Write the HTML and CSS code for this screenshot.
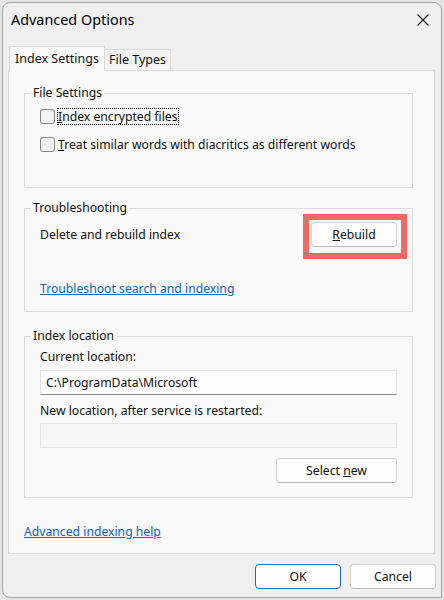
FILE: index.html
```html
<!DOCTYPE html>
<html>
<head>
    <meta charset="utf-8">
    <title>Advanced Options</title>
    <link rel="stylesheet" href="styles.css">
</head>
<body>
<div class="window">
    <div class="titlebar">
        <span class="title">Advanced Options</span>
        <svg class="close" width="12" height="12" viewBox="0 0 12 12">
            <path d="M0.5 0.5 L11.5 11.5 M11.5 0.5 L0.5 11.5" stroke="#1f1f1f" stroke-width="1.1" fill="none"/>
        </svg>
    </div>

    <div class="tabs">
        <div class="tab active">Index Settings</div>
        <div class="tab">File Types</div>
    </div>

    <div class="panel">
        <fieldset class="group group-files">
            <legend>File Settings</legend>
            <label class="check"><input type="checkbox"><span class="focus"><u>I</u>ndex encrypted files</span></label>
            <label class="check"><input type="checkbox"><span><u>T</u>reat similar words with diacritics as different words</span></label>
        </fieldset>

        <fieldset class="group group-trouble">
            <legend>Troubleshooting</legend>
            <div class="rebuild-row">
                <span class="rebuild-label">Delete and rebuild index</span>
                <span class="highlight"><button class="btn btn-rebuild"><u>R</u>ebuild</button></span>
            </div>
            <a class="link link-trouble" href="#">Troubleshoot search and indexing</a>
        </fieldset>

        <fieldset class="group group-location">
            <legend>Index location</legend>
            <div class="field-label">Current location:</div>
            <input class="field" type="text" value="C:\ProgramData\Microsoft" readonly>
            <div class="field-label field-label-new">New location, after service is restarted:</div>
            <input class="field field-empty" type="text" disabled>
            <button class="btn btn-select">Select <u>n</u>ew</button>
        </fieldset>

        <a class="link link-help" href="#">Advanced indexing help</a>
    </div>

    <div class="footer">
        <button class="btn btn-footer btn-default">OK</button>
        <button class="btn btn-footer">Cancel</button>
    </div>
</div>
</body>
</html>
```

FILE: styles.css
```css
body {
    margin: 0;
    padding: 0;
    background: #e6e6e6;
    font: 12.2px "Noto Sans", "Open Sans", sans-serif;
    color: #111;
}

.window {
    box-sizing: border-box;
    width: 440px;
    height: 596px;
    margin: 2px 0 0 2px;
    border: 1px solid #a3a3a3;
    border-radius: 8px 8px 0 8px;
    background: #f0f0f0;
    overflow: hidden;
}

.titlebar {
    height: 43px;
    display: flex;
    justify-content: space-between;
    align-items: flex-start;
    padding-left: 8px;
}

.title {
    font-size: 14.4px;
    line-height: 34px;
    color: #000;
}

.close {
    margin: 11px 12px 0 0;
}

.tabs {
    display: flex;
    align-items: flex-end;
    height: 24px;
    padding-left: 6px;
    position: relative;
    z-index: 1;
}

.tab {
    box-sizing: border-box;
    height: 21px;
    width: 66px;
    line-height: 19px;
    font-size: 12.5px;
    text-align: center;
    border: 1px solid #d9d9d9;
    border-left: none;
    border-bottom: none;
    background: #f3f3f3;
}

.tab.active {
    width: 96px;
    height: 25px;
    line-height: 23px;
    margin-bottom: -1px;
    border-left: 1px solid #d9d9d9;
    background: #f9f9f9;
}

.panel {
    box-sizing: border-box;
    height: 484px;
    margin: 0 6px 0 5px;
    padding: 14px 21px 0 15px;
    border: 1px solid #dadada;
    background: #f9f9f9;
}

.group {
    margin: 0;
    padding: 0 15px;
    border: 1px solid #dcdcdc;
    min-width: 0;
}

.group legend {
    margin-left: -9px;
    padding: 0 2px;
    line-height: 16px;
}

.group-files {
    padding-top: 5px;
    padding-bottom: 32px;
}

.check {
    display: flex;
    align-items: center;
    height: 21px;
}

.check + .check {
    margin-top: 7px;
}

.check input {
    appearance: none;
    box-sizing: border-box;
    width: 15px;
    height: 15px;
    margin: 0 3px 0 0;
    border: 1px solid #858585;
    border-radius: 3px;
    background: #f3f3f3;
}

.focus {
    outline: 1px dotted #000;
    line-height: 15px;
}

.group-trouble {
    margin-top: 12px;
    padding-bottom: 13px;
}

.rebuild-row {
    display: flex;
    justify-content: space-between;
    align-items: flex-start;
    margin-top: -2px;
}

.rebuild-label {
    line-height: 25px;
    margin-top: 8px;
}

.highlight {
    display: block;
    padding: 2px 4px 6px 2px;
    margin-right: -10px;
    border: 6px solid #f26862;
}

.btn {
    box-sizing: border-box;
    height: 25px;
    padding: 0;
    border: 1px solid #d1d1d1;
    border-bottom-color: #bcbcbc;
    border-radius: 4px;
    background: #fdfdfd;
    font: inherit;
    color: #111;
}

.btn-rebuild {
    display: block;
    width: 86px;
}

.link {
    display: block;
    width: fit-content;
    line-height: 18px;
    color: #0a62c2;
    text-decoration: underline;
}

.link-trouble {
    margin-top: 21px;
}

.group-location {
    margin-top: 16px;
    padding-top: 5px;
    padding-bottom: 14px;
}

.field-label {
    line-height: 16px;
}

.field-label-new {
    margin-top: 8px;
}

.field {
    display: block;
    box-sizing: border-box;
    width: 100%;
    height: 25px;
    margin: 5px 0 0 0;
    padding: 0 5px;
    border: 1px solid #e4e4e4;
    border-bottom-color: #868686;
    background: #fcfcfc;
    font: inherit;
    color: #111;
    outline: none;
}

.field-empty {
    margin-top: 4px;
    border-bottom-color: #e4e4e4;
    background: #f7f7f7;
}

.btn-select {
    display: block;
    width: 121px;
    margin: 10px 0 0 auto;
}

.link-help {
    margin-top: 25px;
}

.footer {
    display: flex;
    justify-content: flex-end;
    gap: 9px;
    padding: 10px 5px 0 0;
}

.btn-footer {
    width: 86px;
}

.btn-default {
    border-color: #1a6fc4;
}
```
